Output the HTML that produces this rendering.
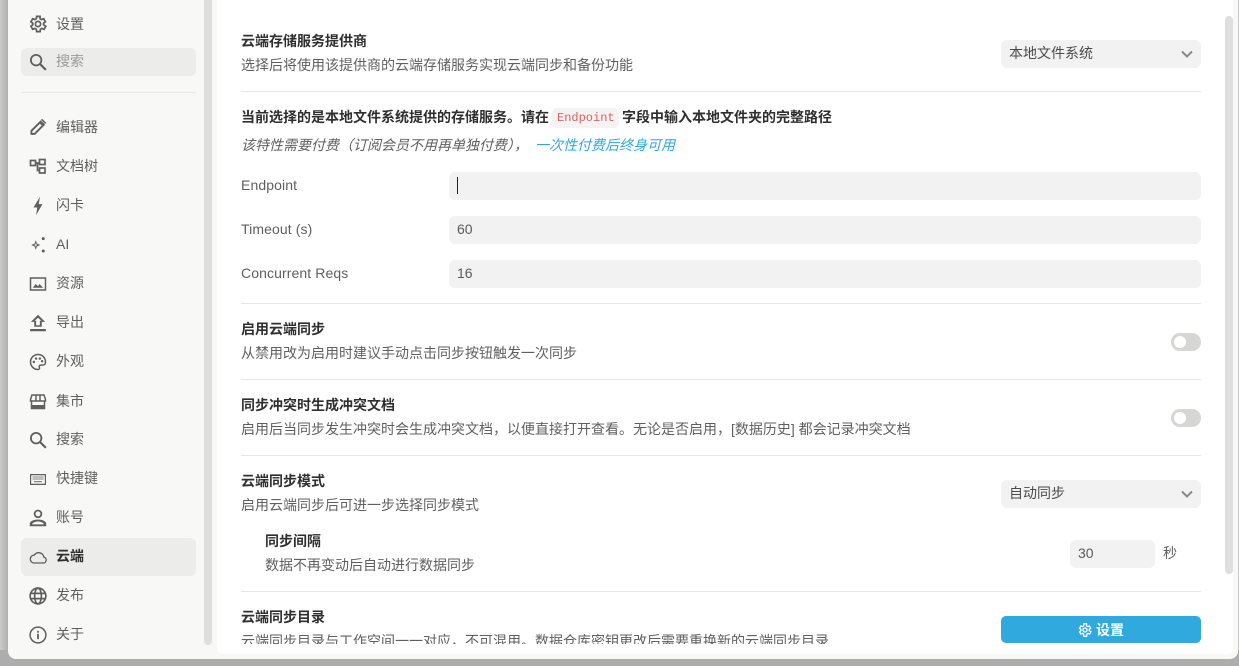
<!DOCTYPE html>
<html><head><meta charset="utf-8">
<style>
*{box-sizing:border-box}
html,body{margin:0;padding:0;width:1239px;height:666px;overflow:hidden;background:#fff;}
body{font-family:"Liberation Sans","Noto Sans CJK SC",sans-serif;font-size:14px;color:#3f3f3f;position:relative}
.a{position:absolute;white-space:nowrap}
#bg{left:0;top:0;width:1239px;height:666px;background:linear-gradient(90deg,#cbcbcb,#b0b0b0 8px,#c8c8c8 8px);}
#bgb{left:0;top:650px;width:1239px;height:16px;background:#adadad}
#dlg{left:8px;top:-10px;width:1230px;height:669px;background:#f8f8f7;border-radius:8px}
#main{left:217px;top:0;width:1016px;height:654px;background:#fff;border-radius:0 0 6px 6px}
.sb{background:#dedede;border-radius:0 0 4px 4px;width:8px}
.nav{left:56px;font-size:14px;line-height:20px;color:#5f5f5f}
.ic{left:29px;width:18px;height:18px;fill:#5f5f5f}
.hr{height:1px;background:#e8e8e7;left:241px;width:960px}
.t{left:241px;font-size:14px;line-height:20px;font-weight:bold;color:#2f2f2f}
.d{left:241px;font-size:14px;line-height:20px;color:#5f5f5f}
.lab{left:241px;font-size:14px;line-height:20px;color:#5f5f5f;letter-spacing:.1px}
.inp{background:#f2f2f2;border-radius:6px;left:449px;width:752px;height:28px;padding-left:8px;line-height:27px;color:#5a5a5a;font-size:14px}
.sel{background:#f2f2f2;border-radius:6px;left:1001px;width:200px;height:28px;padding-left:8px;line-height:27px;color:#4a4a4a;font-size:14px}
.sel svg{position:absolute;left:179px;top:10px}
.sw{left:1171px;width:30px;height:18px;background:#d6d6d4;border-radius:9px}
.sw i{position:absolute;left:3px;top:3px;width:12px;height:12px;background:#fff;border-radius:50%}
</style></head><body>
<div class="a" id="bg"></div>
<div class="a" id="bgb"></div>
<div class="a" id="dlg"></div>
<div class="a" id="main"></div>
<div class="a sb" style="left:204px;top:0;height:645px"></div>
<div class="a sb" style="left:1225px;top:16px;height:558px;border-radius:4px"></div>

<!-- sidebar -->
<svg class="a ic" style="top:15px" viewBox="0 0 24 24"><path d="M19.400 13a7.600 7.600 0 0 0 0-2l2.100-1.600-2-3.500-2.500 1a7.400 7.400 0 0 0-1.700-1L15.400 3.200h-4l-.4 2.700a7.400 7.400 0 0 0-1.700 1l-2.500-1-2 3.500L6.900 11a7.600 7.600 0 0 0 0 2l-2.100 1.600 2 3.500 2.500-1a7.400 7.400 0 0 0 1.700 1l.4 2.700h4l.4-2.700a7.400 7.400 0 0 0 1.700-1l2.500 1 2-3.500z" transform="translate(-2.900 -1.800) scale(1.150)" fill="none" stroke="#5f5f5f" stroke-width="2"/><circle cx="12" cy="12" r="3.500" fill="none" stroke="#5f5f5f" stroke-width="2.200"/></svg>
<div class="a nav" style="top:14px">设置</div>
<div class="a" style="left:21px;top:48px;width:175px;height:28px;background:#ececeb;border-radius:6px"></div>
<svg class="a ic" style="top:53px" viewBox="0 0 24 24"><circle cx="9.500" cy="9.500" r="7" fill="none" stroke="#5f5f5f" stroke-width="2.400"/><path d="M14.500 14.500l8 8" stroke="#5f5f5f" stroke-width="2.800"/></svg>
<div class="a nav" style="top:51px;color:#9a9a9a">搜索</div>
<div class="a" style="left:21px;top:92px;width:175px;height:1px;background:#e8e8e7"></div>

<svg class="a ic" style="top:118px" viewBox="0 0 24 24"><path d="M2 22.500v-6L15.500 3l6 6L8 22.500zM4.500 20h2.400l10-10-2.400-2.400-10 10zM17.500 1l5.500 5.500-1.500 1.500L16 2.500z" fill-rule="evenodd"/></svg>
<div class="a nav" style="top:117px">编辑器</div>
<svg class="a ic" style="top:157px" viewBox="0 0 18 18"><g fill="none" stroke="#5f5f5f" stroke-width="1.700"><rect x="1.500" y="3.500" width="5" height="5"/><rect x="10.500" y="2.500" width="5.500" height="5"/><rect x="10.500" y="11" width="5.500" height="5"/><path d="M6.500 6h4M8.500 6v7.500h2"/></g></svg>
<div class="a nav" style="top:156px">文档树</div>
<svg class="a ic" style="top:197px" viewBox="0 0 24 24"><path d="M14.500 0L6 14h5l-1.500 10L18 9.500h-5z"/></svg>
<div class="a nav" style="top:195px">闪卡</div>
<svg class="a ic" style="top:236px" viewBox="0 0 24 24"><path d="M9 5.500l1.500 4.500 4.500 2-4.500 2L9 18.500 7.500 14 3 12l4.500-2zM9 9.500l-.6 1.600-1.600.9 1.600.9.6 1.600.6-1.600 1.600-.9-1.600-.9z" fill-rule="evenodd"/><circle cx="19" cy="3.500" r="2"/><circle cx="19" cy="20" r="2"/></svg>
<div class="a nav" style="top:234px">AI</div>
<svg class="a ic" style="top:275px" viewBox="0 0 24 24"><path d="M1 3h22v18H1zM3 5v14h18V5zM5 17l4-5 3 3 2-3 5 5z" fill-rule="evenodd"/></svg>
<div class="a nav" style="top:273px">资源</div>
<svg class="a ic" style="top:314px" viewBox="0 0 24 24"><path d="M12 1l9.500 9.500H17V17H7v-6.500H2.500zM12 5L7.500 9H9.500v6h5V9h2zM1.500 20h21v3h-21z" fill-rule="evenodd"/></svg>
<div class="a nav" style="top:312px">导出</div>
<svg class="a ic" style="top:353px" viewBox="0 0 24 24"><path d="M12 2a10 10 0 1 0 0 20c2 0 2.500-1.500 1.800-2.800-.8-1.500.2-3 1.800-3h2.500c2.300 0 3.900-1.500 3.900-3.900C22 6 17.500 2 12 2z" fill="none" stroke="#5f5f5f" stroke-width="2"/><circle cx="6.500" cy="12" r="1.600"/><circle cx="9.500" cy="7.500" r="1.600"/><circle cx="14.500" cy="7.500" r="1.600"/><circle cx="17.500" cy="11" r="1.600"/></svg>
<div class="a nav" style="top:351px">外观</div>
<svg class="a ic" style="top:392px" viewBox="0 0 18 18"><g fill="none" stroke="#5f5f5f" stroke-width="1.500"><path d="M3 3h12l1.500 4.500v1.500h-15V7.500z"/><path d="M2.500 9v7.500h13V9M7 3v6M11 3v6"/></g><rect x="2" y="13" width="14" height="4"/></svg>
<div class="a nav" style="top:391px">集市</div>
<svg class="a ic" style="top:431px" viewBox="0 0 24 24"><circle cx="9.500" cy="9.500" r="7" fill="none" stroke="#5f5f5f" stroke-width="2.400"/><path d="M14.500 14.500l8 8" stroke="#5f5f5f" stroke-width="2.800"/></svg>
<div class="a nav" style="top:429px">搜索</div>
<svg class="a ic" style="top:470px" viewBox="0 0 18 18"><path d="M1 4h16v11H1zM2.200 5.200v8.600h13.600V5.200z" fill-rule="evenodd"/><path d="M3.500 6.500h11v1h-11zM3.500 8.500h11v1h-11zM5 11h8v1.300H5z" opacity=".75"/></svg>
<div class="a nav" style="top:468px">快捷键</div>
<svg class="a ic" style="top:509px" viewBox="0 0 24 24"><circle cx="12" cy="6.500" r="4.500" fill="none" stroke="#5f5f5f" stroke-width="2.400"/><path d="M1 23v-3c0-4 6-6 11-6s11 2 11 6v3zM4 20.500h16c-.5-2-4.500-3.800-8-3.800s-7.500 1.800-8 3.800z" fill-rule="evenodd"/></svg>
<div class="a nav" style="top:507px">账号</div>
<div class="a" style="left:21px;top:538px;width:175px;height:38px;background:#ececeb;border-radius:6px"></div>
<svg class="a ic" style="top:548px" viewBox="0 0 24 24"><path d="M6 20h13a4 4 0 0 0 .8-7.900A7 7 0 0 0 7 9.500 5.300 5.300 0 0 0 6 20z" fill="none" stroke="#5f5f5f" stroke-width="1.800"/></svg>
<div class="a nav" style="top:546px;font-weight:bold;color:#2f2f2f">云端</div>
<svg class="a ic" style="top:587px" viewBox="0 0 24 24"><g fill="none" stroke="#5f5f5f" stroke-width="2.200"><circle cx="12" cy="12" r="10.500"/><ellipse cx="12" cy="12" rx="4.500" ry="10.500"/><path d="M2 8.500h20M2 15.500h20"/></g></svg>
<div class="a nav" style="top:585px">发布</div>
<svg class="a ic" style="top:626px" viewBox="0 0 24 24"><circle cx="12" cy="12" r="10.500" fill="none" stroke="#5f5f5f" stroke-width="2"/><rect x="10.800" y="10.500" width="2.400" height="7"/><rect x="10.800" y="6.500" width="2.400" height="2.400"/></svg>
<div class="a nav" style="top:624px">关于</div>

<!-- main -->
<div class="a t" style="top:31px">云端存储服务提供商</div>
<div class="a d" style="top:55px">选择后将使用该提供商的云端存储服务实现云端同步和备份功能</div>
<div class="a sel" style="top:40px">本地文件系统<svg width="14" height="10" viewBox="0 0 14 10"><path d="M2 1.500l5 5 5-5" fill="none" stroke="#8a8a8a" stroke-width="2"/></svg></div>
<div class="a hr" style="top:91px"></div>

<div class="a t" style="top:107px">当前选择的是本地文件系统提供的存储服务。请在</div>
<div class="a" style="left:552px;top:108px;width:67px;height:20px;background:#f3f3f3;border-radius:5px;padding-left:5px;font:12px/20px 'Liberation Mono',monospace;color:#e0605c">Endpoint</div>
<div class="a t" style="top:107px;left:622px">字段中输入本地文件夹的完整路径</div>
<div class="a d" style="top:135px;font-style:italic">该特性需要付费（订阅会员不用再单独付费），</div>
<div class="a d" style="top:135px;left:535px;font-style:italic;color:#2fa8de">一次性付费后终身可用</div>

<div class="a lab" style="top:175px">Endpoint</div>
<div class="a inp" style="top:172px"></div>
<div class="a" style="left:457px;top:177px;width:1px;height:17px;background:#222"></div>
<div class="a lab" style="top:219px">Timeout (s)</div>
<div class="a inp" style="top:216px">60</div>
<div class="a lab" style="top:263px">Concurrent Reqs</div>
<div class="a inp" style="top:260px">16</div>
<div class="a hr" style="top:303px"></div>

<div class="a t" style="top:319px">启用云端同步</div>
<div class="a d" style="top:343px">从禁用改为启用时建议手动点击同步按钮触发一次同步</div>
<div class="a sw" style="top:333px"><i></i></div>
<div class="a hr" style="top:379px"></div>

<div class="a t" style="top:395px">同步冲突时生成冲突文档</div>
<div class="a d" style="top:419px">启用后当同步发生冲突时会生成冲突文档，以便直接打开查看。无论是否启用，[数据历史] 都会记录冲突文档</div>
<div class="a sw" style="top:409px"><i></i></div>
<div class="a hr" style="top:455px"></div>

<div class="a t" style="top:471px">云端同步模式</div>
<div class="a d" style="top:495px">启用云端同步后可进一步选择同步模式</div>
<div class="a sel" style="top:480px">自动同步<svg width="14" height="10" viewBox="0 0 14 10"><path d="M2 1.500l5 5 5-5" fill="none" stroke="#8a8a8a" stroke-width="2"/></svg></div>

<div class="a t" style="top:531px;left:265px">同步间隔</div>
<div class="a d" style="top:555px;left:265px">数据不再变动后自动进行数据同步</div>
<div class="a inp" style="top:540px;left:1070px;width:85px">30</div>
<div class="a d" style="top:543px;left:1163px">秒</div>
<div class="a hr" style="top:591px"></div>

<div class="a t" style="top:607px">云端同步目录</div>
<div style="position:absolute;left:217px;top:0;width:1008px;height:644px;overflow:hidden">
<div class="a d" style="top:631px;left:24px">云端同步目录与工作空间一一对应，不可混用。数据仓库密钥更改后需要重换新的云端同步目录</div>
<div class="a" style="left:784px;top:616px;width:200px;height:27px;background:#2fa9de;border-radius:5px"></div>
<svg class="a" style="left:860px;top:622px" width="16" height="16" viewBox="0 0 24 24"><path d="M19.400 13a7.600 7.600 0 0 0 0-2l2.100-1.600-2-3.500-2.500 1a7.400 7.400 0 0 0-1.700-1L15.400 2.500h-4l-.4 3.400a7.400 7.400 0 0 0-1.700 1l-2.500-1-2 3.500L6.900 11a7.600 7.600 0 0 0 0 2l-2.100 1.600 2 3.500 2.500-1a7.400 7.400 0 0 0 1.700 1l.4 3.400h4l.4-3.400a7.400 7.400 0 0 0 1.700-1l2.500 1 2-3.500z" transform="translate(-1 0)" fill="none" stroke="#fff" stroke-width="2"/><circle cx="12" cy="12" r="3" fill="none" stroke="#fff" stroke-width="2"/></svg>
<div class="a" style="left:879px;top:620px;font-size:14px;line-height:20px;font-weight:bold;color:#fff">设置</div>
</div>
</body></html>
